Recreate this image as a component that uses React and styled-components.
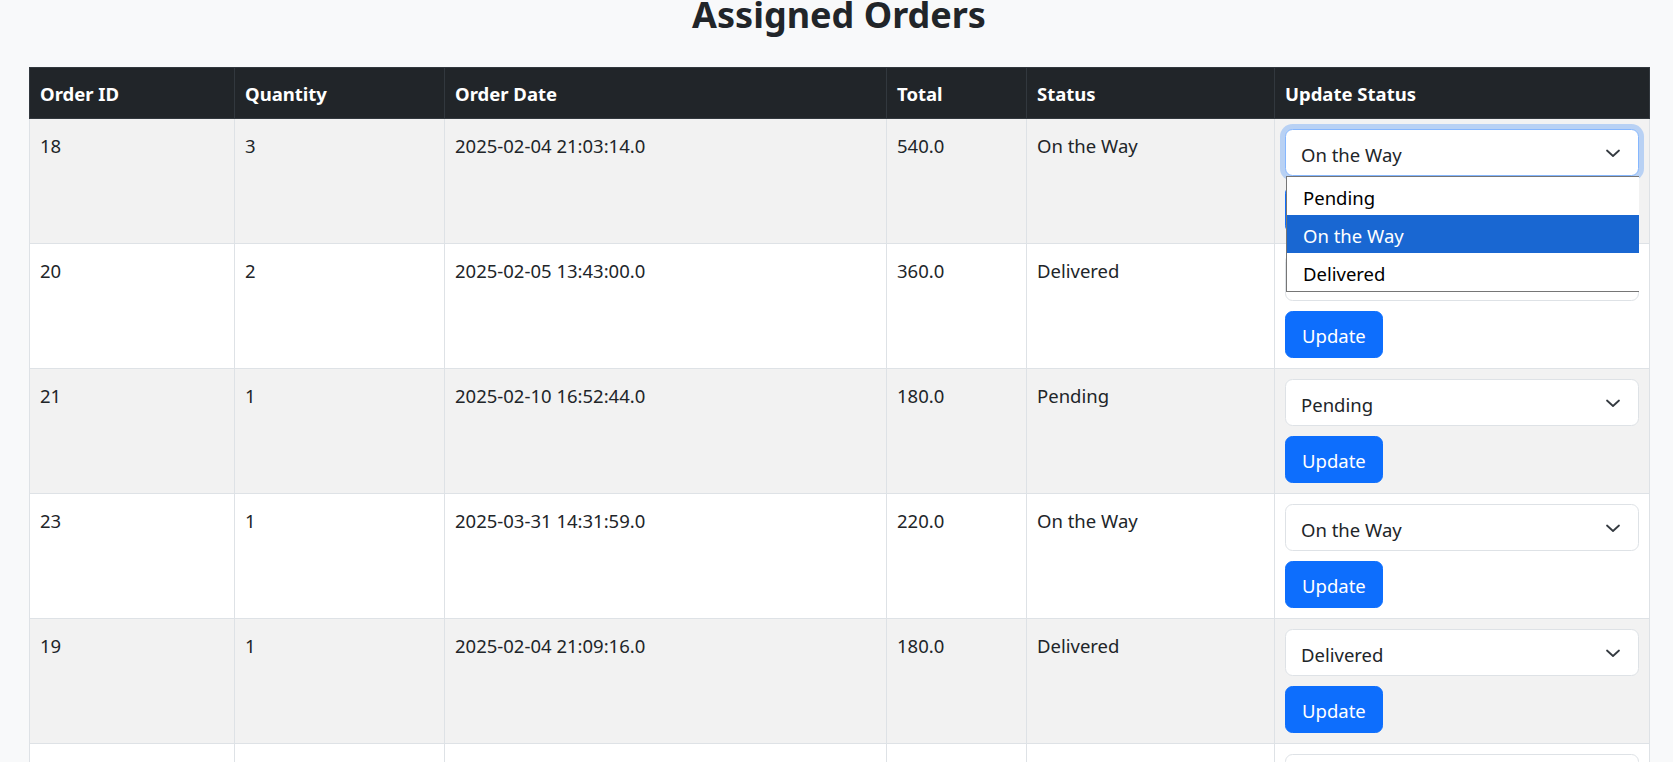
import React from "react";
import styled, { createGlobalStyle } from "styled-components";

const GlobalStyle = createGlobalStyle`
  html, body {
    margin: 0;
    padding: 0;
    overflow: hidden;
    background: #f8f9fa;
  }
  body {
    font-family: "Noto Sans", "Open Sans", "DejaVu Sans", sans-serif;
    color: #212529;
  }
  *, *::before, *::after { box-sizing: border-box; }
`;

const Page = styled.main`
  width: 1620px;
  margin: -9px 0 0 29px;
`;

const Title = styled.h2`
  margin: 0 0 28px;
  font-size: 36px;
  line-height: 48px;
  font-weight: 700;
  text-align: center;
  color: #212529;
`;

const Table = styled.table`
  width: 1620px;
  border-collapse: collapse;
  table-layout: fixed;
  font-size: 18.5px;
  line-height: 30px;
  color: #212529;
  border: 1px solid #dee2e6;
`;

const HeadRow = styled.tr`
  background: #212529;
`;

const HeadCell = styled.th`
  padding: 11px 10px 9px;
  text-align: left;
  font-weight: 700;
  color: #fff;
  border: 1px solid #32383e;
`;

const Row = styled.tr`
  background: ${(p) => (p.$striped ? "#f2f2f2" : "#ffffff")};
`;

const Cell = styled.td`
  padding: ${(p) => (p.$action ? "10px" : "12px 10px 9px")};
  vertical-align: top;
  border: 1px solid #dee2e6;
  white-space: nowrap;
`;

const SelectWrap = styled.div`
  position: relative;
`;

const Select = styled.select`
  display: block;
  width: 100%;
  height: 47px;
  padding: 5px 45px 0 15px;
  appearance: none;
  -webkit-appearance: none;
  font-family: inherit;
  font-size: 18.5px;
  line-height: 30px;
  color: #212529;
  background: #fff;
  border: 1px solid ${(p) => (p.$focused ? "#86b7fe" : "#dee2e6")};
  border-radius: 7.5px;
  box-shadow: ${(p) => (p.$focused ? "0 0 0 5px rgba(13, 110, 253, 0.25)" : "none")};
  outline: none;
`;

const Chevron = styled.svg`
  position: absolute;
  right: 18px;
  top: 50%;
  transform: translateY(-50%);
  pointer-events: none;
`;

const Popup = styled.ul`
  position: absolute;
  top: 100%;
  left: 1px;
  right: 0;
  z-index: 10;
  margin: 0;
  padding: 0;
  list-style: none;
  background: #fff;
  border: 1px solid #767676;
  border-right: none;
`;

const PopupOption = styled.li`
  height: 38px;
  padding: 4px 0 0 16px;
  line-height: 34px;
  font-size: 18.5px;
  color: ${(p) => (p.$active ? "#ffffff" : "#000000")};
  background: ${(p) => (p.$active ? "#1967d2" : "transparent")};
`;

const UpdateButton = styled.button`
  display: inline-block;
  margin-top: 10px;
  height: 47px;
  padding: 2px 16px 0;
  font-family: inherit;
  font-size: 18.5px;
  line-height: 30px;
  color: #fff;
  background: #0d6efd;
  border: 1px solid #0d6efd;
  border-radius: 7.5px;
  cursor: pointer;
`;

const STATUSES = ["Pending", "On the Way", "Delivered"];

const orders = [
  { id: 18, qty: 3, date: "2025-02-04 21:03:14.0", total: "540.0", status: "On the Way", open: true },
  { id: 20, qty: 2, date: "2025-02-05 13:43:00.0", total: "360.0", status: "Delivered" },
  { id: 21, qty: 1, date: "2025-02-10 16:52:44.0", total: "180.0", status: "Pending" },
  { id: 23, qty: 1, date: "2025-03-31 14:31:59.0", total: "220.0", status: "On the Way" },
  { id: 19, qty: 1, date: "2025-02-04 21:09:16.0", total: "180.0", status: "Delivered" },
  { id: 22, qty: 2, date: "2025-03-12 10:15:27.0", total: "360.0", status: "Pending" },
];

const columns = [
  { label: "Order ID", width: 205 },
  { label: "Quantity", width: 210 },
  { label: "Order Date", width: 442 },
  { label: "Total", width: 140 },
  { label: "Status", width: 248 },
  { label: "Update Status", width: 375 },
];

function StatusSelect({ value, open }) {
  return (
    <SelectWrap>
      <Select defaultValue={value} $focused={open}>
        {STATUSES.map((s) => (
          <option key={s} value={s}>
            {s}
          </option>
        ))}
      </Select>
      <Chevron width="16" height="10" viewBox="0 0 16 10" fill="none">
        <path
          d="M2 2.5l6 5.5 6-5.5"
          stroke="#343a40"
          strokeWidth="1.8"
          strokeLinecap="round"
          strokeLinejoin="round"
        />
      </Chevron>
      {open && (
        <Popup>
          {STATUSES.map((s) => (
            <PopupOption key={s} $active={s === value}>
              {s}
            </PopupOption>
          ))}
        </Popup>
      )}
    </SelectWrap>
  );
}

export default function App() {
  return (
    <>
      <GlobalStyle />
      <Page>
        <Title>Assigned Orders</Title>
        <Table>
          <colgroup>
            {columns.map((c) => (
              <col key={c.label} style={{ width: c.width }} />
            ))}
          </colgroup>
          <thead>
            <HeadRow>
              {columns.map((c) => (
                <HeadCell key={c.label}>{c.label}</HeadCell>
              ))}
            </HeadRow>
          </thead>
          <tbody>
            {orders.map((o, i) => (
              <Row key={o.id} $striped={i % 2 === 0}>
                <Cell>{o.id}</Cell>
                <Cell>{o.qty}</Cell>
                <Cell>{o.date}</Cell>
                <Cell>{o.total}</Cell>
                <Cell>{o.status}</Cell>
                <Cell $action>
                  <StatusSelect value={o.status} open={o.open} />
                  <UpdateButton type="button">Update</UpdateButton>
                </Cell>
              </Row>
            ))}
          </tbody>
        </Table>
      </Page>
    </>
  );
}
